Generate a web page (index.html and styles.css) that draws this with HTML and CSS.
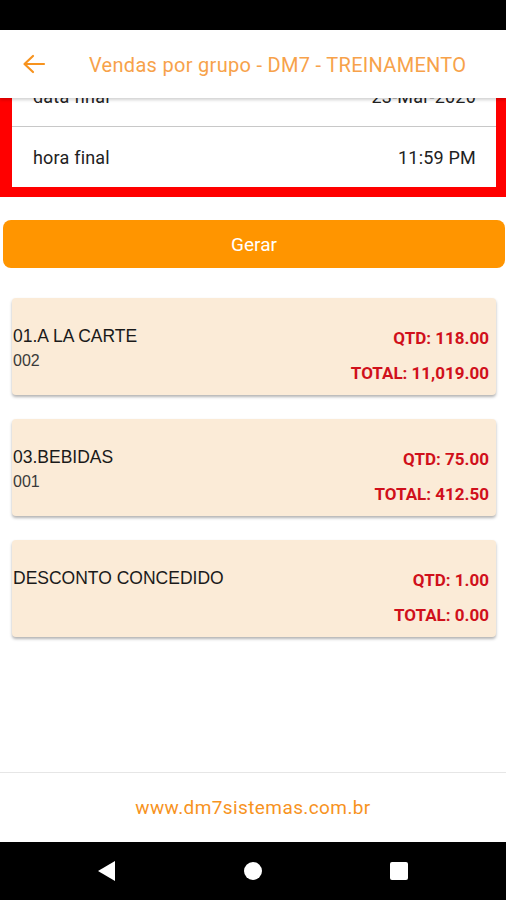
FILE: index.html
```html
<!DOCTYPE html>
<html lang="pt-BR">
<head>
    <meta charset="UTF-8">
    <meta name="viewport" content="width=device-width, initial-scale=1.0">
    <title>Vendas por grupo</title>
    <link rel="stylesheet" href="styles.css">
</head>
<body>
    <div class="phone">
        <div class="status-bar"></div>

        <header class="app-bar">
            <svg class="back" width="24" height="20" viewBox="0 0 24 20">
                <path d="M22 10H3M11 2L2.5 10L11 18" fill="none" stroke="#f7931e" stroke-width="2.2" stroke-linecap="round" stroke-linejoin="round"/>
            </svg>
            <span class="app-title">Vendas por grupo - DM7 - TREINAMENTO</span>
        </header>

        <main class="content">
            <div class="scroll">
                <div class="filter-frame">
                    <div class="filter-row">
                        <span>data final</span>
                        <span>23-Mar-2020</span>
                    </div>
                    <div class="filter-row">
                        <span>hora final</span>
                        <span>11:59 PM</span>
                    </div>
                </div>

                <button class="btn-gerar">Gerar</button>

                <div class="card">
                    <div class="card-left">
                        <div class="group-name">01.A LA CARTE</div>
                        <div class="group-code">002</div>
                    </div>
                    <div class="card-right">
                        <div>QTD: 118.00</div>
                        <div>TOTAL: 11,019.00</div>
                    </div>
                </div>

                <div class="card">
                    <div class="card-left">
                        <div class="group-name">03.BEBIDAS</div>
                        <div class="group-code">001</div>
                    </div>
                    <div class="card-right">
                        <div>QTD: 75.00</div>
                        <div>TOTAL: 412.50</div>
                    </div>
                </div>

                <div class="card">
                    <div class="card-left">
                        <div class="group-name">DESCONTO CONCEDIDO</div>
                        <div class="group-code"></div>
                    </div>
                    <div class="card-right">
                        <div>QTD: 1.00</div>
                        <div>TOTAL: 0.00</div>
                    </div>
                </div>
            </div>
        </main>

        <footer class="site-footer">www.dm7sistemas.com.br</footer>

        <nav class="nav-bar">
            <svg width="20" height="22" viewBox="0 0 20 22"><path d="M18 1V21L1 11Z" fill="#fff"/></svg>
            <svg width="20" height="20" viewBox="0 0 20 20"><circle cx="10" cy="10" r="9" fill="#fff"/></svg>
            <svg width="20" height="20" viewBox="0 0 20 20"><rect x="1" y="1" width="18" height="18" rx="2" fill="#fff"/></svg>
        </nav>
    </div>
</body>
</html>
```

FILE: styles.css
```css
body {
    margin: 0;
    background-color: #fff;
    font-family: Roboto, 'Noto Sans', sans-serif;
}

.phone {
    display: flex;
    flex-direction: column;
    width: 506px;
    height: 900px;
    overflow: hidden;
}

.status-bar {
    height: 30px;
    background-color: #000;
    flex-shrink: 0;
}

/* App bar sits above the scrolled content */
.app-bar {
    position: relative;
    z-index: 2;
    height: 68px;
    flex-shrink: 0;
    display: flex;
    align-items: center;
    background-color: #fff;
    box-shadow: 0 2px 3px rgba(0, 0, 0, 0.18);
}

.back {
    margin-left: 22px;
}

.app-title {
    margin-left: 43px;
    padding-top: 2px;
    color: #f7a24a;
    font-size: 20px;
    letter-spacing: 0.3px;
    white-space: nowrap;
}

.content {
    flex-grow: 1;
    overflow: hidden;
    border-bottom: 1px solid #e6e6e6;
}

/* content is scrolled, the first filter row is half under the app bar */
.scroll {
    margin-top: -38px;
    display: flex;
    flex-direction: column;
}

.filter-frame {
    background-color: #fff;
    border: solid #ff0000;
    border-width: 0 10px 10px 12px;
    padding-top: 6px;
}

.filter-row {
    height: 60px;
    display: flex;
    justify-content: space-between;
    align-items: center;
    padding: 0 20px 0 21px;
    color: #222;
    font-size: 18px;
    letter-spacing: 0.2px;
}

.filter-row + .filter-row {
    border-top: 1px solid #c8c8c8;
}

.btn-gerar {
    margin: 23px 1px 0 3px;
    height: 48px;
    border: none;
    border-radius: 8px;
    background-color: #ff9500;
    color: #fff;
    font-family: inherit;
    font-size: 19px;
}

.card {
    margin: 30px 10px 0 12px;
    height: 97px;
    display: flex;
    justify-content: space-between;
    background-color: #fbebd7;
    border-radius: 4px;
    box-shadow: 0 2px 3px rgba(0, 0, 0, 0.3);
}

.card + .card {
    margin-top: 24px;
}

.card-left {
    padding: 27px 0 0 1px;
    color: #1a1a1a;
    font-family: 'Liberation Sans', Arial, sans-serif;
}

.group-name {
    font-size: 17.5px;
    line-height: 22px;
}

.group-code {
    margin-top: 4px;
    font-size: 16px;
    line-height: 19px;
    color: #3a3a3a;
}

.card-right {
    padding: 30px 7px 0 0;
    display: flex;
    flex-direction: column;
    align-items: flex-end;
    gap: 15px;
    color: #d0101b;
    font-weight: bold;
    font-size: 17px;
    line-height: 20px;
}

.site-footer {
    height: 69px;
    flex-shrink: 0;
    display: flex;
    justify-content: center;
    align-items: center;
    color: #f7931e;
    font-size: 19px;
    letter-spacing: 0.4px;
}

.nav-bar {
    height: 58px;
    flex-shrink: 0;
    background-color: #000;
    display: flex;
    justify-content: center;
    align-items: center;
    gap: 126px;
}
```
